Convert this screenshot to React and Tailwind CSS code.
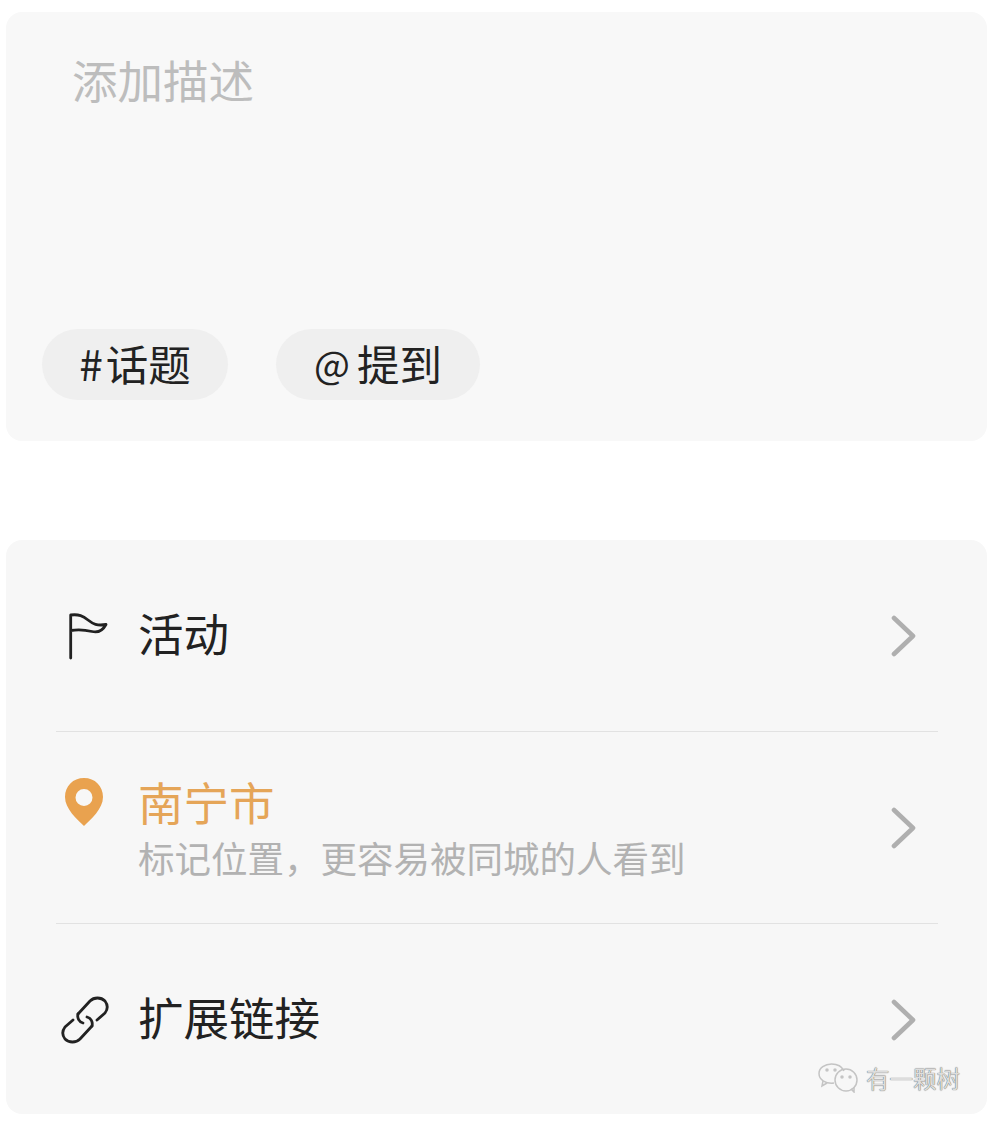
const FONT = { fontFamily: '"Noto Sans CJK SC", "Liberation Sans", sans-serif' };

function Chevron() {
  return (
    <svg width="26" height="42" viewBox="0 0 26 42" fill="none" className="shrink-0">
      <path d="M3 3 L22 21 L3 39" stroke="#afafaf" strokeWidth="4.6" strokeLinecap="round" strokeLinejoin="round" />
    </svg>
  );
}

function Row({ icon, title, titleClass = "text-[#222222]", sub, last }) {
  return (
    <div className={`flex h-[192px] items-center ml-[50px] mr-[49px] ${last ? "" : "border-b border-[#e2e2e2]"}`}>
      <div className="w-[82px] shrink-0 flex items-center">{icon}</div>
      <div className={`flex-1 min-w-0 ${sub ? "" : "-mt-[8px]"}`}>
        <div className={`text-[45.5px] leading-[52px] ${titleClass}`}>{title}</div>
        {sub && <div className="mt-[9px] text-[36.5px] leading-[44px] text-[#b2b2b2] whitespace-nowrap">{sub}</div>}
      </div>
      <div className="mr-[21px] flex">
        <Chevron />
      </div>
    </div>
  );
}

const FlagIcon = (
  <svg width="46" height="50" viewBox="0 0 46 50" fill="none" className="ml-[10px]">
    <path d="M4.7 47 V4 C13 3 17 5 22 9 C27 13 31 15 40 13.5 C37 19 32 22 26 20.5 C20 19 13 18 4.7 19.5" stroke="#222" strokeWidth="2.8" strokeLinejoin="round" strokeLinecap="round" />
  </svg>
);

const PinIcon = (
  <svg width="40" height="50" viewBox="0 0 40 50" className="ml-[8px] -mt-[52px]">
    <path fillRule="evenodd" fill="#e9a24f" d="M20 1 C31 1 39 9 39 20 C39 32 27 42 20 49 C13 42 1 32 1 20 C1 9 9 1 20 1 Z M20 12 A8.5 8.5 0 1 0 20 29 A8.5 8.5 0 1 0 20 12 Z" />
  </svg>
);

const LinkIcon = (
  <svg width="48" height="48" viewBox="0 0 48 48" fill="none" className="ml-[5px]" stroke="#222" strokeWidth="2.8" strokeLinecap="round" strokeLinejoin="round">
    <path d="M17 18 L29 5 C33 1 40 1 44 5 C47 9 47 13 44 17 L36 24" />
    <path d="M17 18 C16 22 18 26 22 27" />
    <path d="M31 30 L19 43 C15 47 8 47 4 43 C1 39 1 35 4 31 L12 24" />
    <path d="M31 30 C32 26 30 22 26 21" />
  </svg>
);

const WeChat = (
  <svg width="42" height="30" viewBox="0 0 42 30" fill="none" stroke="#c4c4c4" strokeWidth="1.5">
    <path d="M16 20 C8 21 1 17 1 10.5 C1 5 7 1 13.5 1 C19 1 24 3.5 26 8" />
    <path d="M5 18 L4 23 L9 20" />
    <circle cx="28" cy="17" r="11" />
    <path d="M33 26 L36 29 L36 24" />
    <circle cx="9" cy="7" r="1" fill="#c4c4c4" />
    <circle cx="17" cy="7" r="1" fill="#c4c4c4" />
    <circle cx="24" cy="14" r="1" fill="#c4c4c4" />
    <circle cx="32" cy="14" r="1" fill="#c4c4c4" />
  </svg>
);

export default function App() {
  return (
    <div className="relative h-[1123px] w-[993px] overflow-hidden bg-white px-[6px] pt-[12px]" style={FONT}>
      <div className="flex h-[429px] flex-col justify-between rounded-[16px] bg-[#f8f8f8] pb-[41px]">
        <div className="pl-[66px] pt-[37px] text-[45.5px] leading-[60px] text-[#bdbdbd]">添加描述</div>
        <div className="flex gap-[48px] pl-[36px]">
          <div className="flex h-[71px] w-[186px] items-center justify-center rounded-full bg-[#efefef] pb-[4px] text-[42.5px] text-[#222222]">
            <span className="mr-[3px]">#</span>话题
          </div>
          <div className="flex h-[71px] w-[204px] items-center justify-center rounded-full bg-[#efefef] pb-[4px] text-[42.5px] text-[#222222]">
            <span className="mr-[7px] text-[38px]">@</span>提到
          </div>
        </div>
      </div>
      <div className="mt-[99px] h-[574px] rounded-[16px] bg-[#f7f7f7]">
        <Row icon={FlagIcon} title="活动" />
        <Row icon={PinIcon} title="南宁市" titleClass="text-[#e5a558]" sub="标记位置，更容易被同城的人看到" />
        <Row icon={LinkIcon} title="扩展链接" last />
      </div>
      <div className="absolute left-[818px] top-[1063px] flex items-center gap-[6px]">
        {WeChat}
        <span className="text-[23.5px] leading-[30px] text-[#dddddd] [text-shadow:0_0_1px_#333333] whitespace-nowrap">有一颗树</span>
      </div>
    </div>
  );
}
